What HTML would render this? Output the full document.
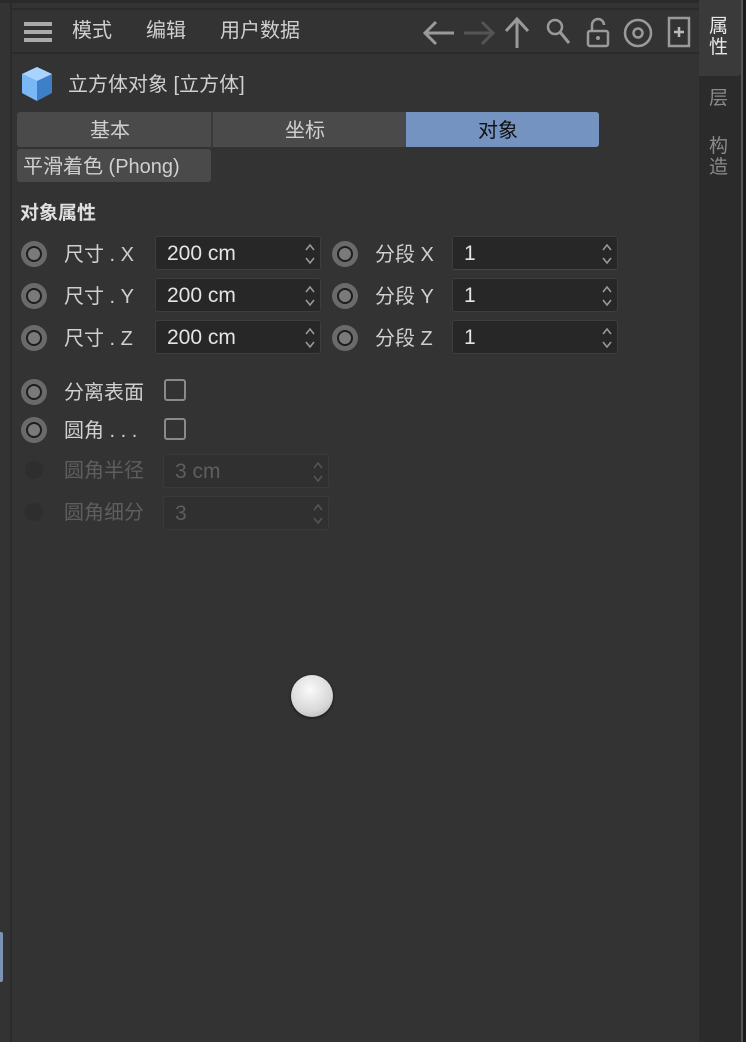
<!DOCTYPE html>
<html><head><meta charset="utf-8"><style>
*{margin:0;padding:0;box-sizing:border-box}
body{width:746px;height:1042px;background:#333;position:relative;overflow:hidden;font-family:"Liberation Sans","Noto Sans CJK SC",sans-serif;color:#d0d0d0}
.a{position:absolute}
.t{font-size:20px;white-space:nowrap;line-height:24px;margin-top:2px}
.rad{position:absolute;width:26px;height:26px;border-radius:50%;background:#6a6a6a}
.rad::after{content:"";position:absolute;left:5px;top:5px;width:16px;height:16px;border-radius:50%;background:#7a7a7a;border:2px solid #1e1e1e;box-sizing:border-box}
.fld{position:absolute;height:34px;background:#272727;border:1px solid #3e3e3e;border-radius:3px;font-size:21px;line-height:34px;color:#e4e4e4;padding:0 0 0 11px}
.sp{position:absolute;right:4px;top:5px;width:12px;height:24px}
.cb{position:absolute;width:22px;height:22px;border:2px solid #8a8a8a;border-radius:3px}
</style></head><body>
<div class="a" style="left:10px;top:0;width:2px;height:1042px;background:#2a2a2a"></div>
<div class="a" style="left:0;top:932px;width:3px;height:50px;background:#7d93b3;border-radius:0 2px 2px 0"></div>
<div class="a" style="left:0;top:0;width:699px;height:3px;background:#2a2a2a"></div>
<div class="a" style="left:12px;top:8px;width:687px;height:2px;background:#2a2a2a"></div>
<div class="a" style="left:12px;top:52px;width:687px;height:2px;background:#2a2a2a"></div>
<div class="a" style="left:699px;top:0;width:42px;height:1042px;background:#2b2b2b"></div>
<div class="a" style="left:699px;top:0;width:42px;height:76px;background:#3a3a3a;border-radius:0 0 3px 0"></div>
<div class="a" style="left:741px;top:0;width:2px;height:1042px;background:#555"></div>
<div class="a" style="left:743px;top:0;width:3px;height:1042px;background:#1a1a1a"></div>
<div class="a" style="left:709px;top:16px;font-size:19px;line-height:21px;width:22px;color:#e8e8e8">属<br>性</div>
<div class="a" style="left:709px;top:88px;font-size:19px;line-height:21px;width:22px;color:#8a8a8a">层</div>
<div class="a" style="left:709px;top:136px;font-size:19px;line-height:21px;width:22px;color:#8a8a8a">构<br>造</div>
<div class="a" style="left:24px;top:22px;width:28px;height:4px;background:#aaa;box-shadow:0 8px 0 #aaa,0 16px 0 #aaa"></div>
<div class="a t" style="left:72px;top:17px">模式</div>
<div class="a t" style="left:146px;top:17px">编辑</div>
<div class="a t" style="left:220px;top:17px">用户数据</div>
<svg class="a" style="left:420px;top:14px" width="278" height="36" viewBox="0 0 278 36" fill="none" stroke-width="3">
<path d="M34 19H6M16 8L5 19L16 30" stroke="#9a9a9a"/>
<path d="M44 19H72M62 8L73 19L62 30" stroke="#555"/>
<path d="M97 34V6M86 17L97 5L108 17" stroke="#9a9a9a"/>
<circle cx="135" cy="13" r="7" stroke="#9a9a9a" stroke-width="2.5"/><path d="M140 18L149 29" stroke="#9a9a9a" stroke-width="3"/>
<rect x="168" y="17" width="20" height="15" rx="2" stroke="#9a9a9a" stroke-width="2.5"/><path d="M172 17V11a6 6 0 0 1 12 0" stroke="#9a9a9a" stroke-width="2.5"/><circle cx="178" cy="24" r="2" fill="#9a9a9a" stroke="none"/>
<circle cx="218" cy="19" r="13" stroke="#9a9a9a" stroke-width="2.5"/><circle cx="218" cy="19" r="4.5" stroke="#9a9a9a" stroke-width="2.5"/>
<rect x="249" y="4" width="20" height="28" stroke="#9a9a9a" stroke-width="2.5"/><path d="M259 13V23M254 18H264" stroke="#bbb" stroke-width="2.5"/>
</svg>
<svg class="a" style="left:20px;top:66px" width="34" height="36" viewBox="0 0 34 36">
<path d="M17 1L32 8V27L17 35L2 27V8Z" fill="#3e80c8"/>
<path d="M17 1L32 8L17 15L2 8Z" fill="#a8d4ff"/>
<path d="M2 8L17 15V35L2 27Z" fill="#7ab8f5"/>
</svg>
<div class="a t" style="left:68px;top:71px">立方体对象 [立方体]</div>
<div class="a" style="left:17px;top:112px;width:582px;height:35px;background:#4a4a4a;border-radius:3px"></div>
<div class="a" style="left:211px;top:112px;width:2px;height:35px;background:#3a3a3a"></div>
<div class="a" style="left:406px;top:112px;width:193px;height:35px;background:#7493c0;border-radius:0 3px 3px 0"></div>
<div class="a t" style="left:90px;top:117px">基本</div>
<div class="a t" style="left:285px;top:117px">坐标</div>
<div class="a t" style="left:478px;top:117px;color:#111">对象</div>
<div class="a" style="left:17px;top:149px;width:194px;height:33px;background:#4a4a4a;border-radius:3px"></div>
<div class="a t" style="left:23px;top:153px">平滑着色 (Phong)</div>
<div class="a t" style="left:20px;top:200px;font-weight:bold;color:#e0e0e0;font-size:19px">对象属性</div>

<div class="rad" style="left:21px;top:241px"></div><div class="a t" style="left:64px;top:241px">尺寸 . X</div>
<div class="fld" style="left:155px;top:236px;width:166px">200 cm<svg class="sp" viewBox="0 0 12 24" fill="none" stroke="#999" stroke-width="1.6"><path d="M2 8L6 3L10 8M2 16L6 21L10 16"/></svg></div>
<div class="rad" style="left:332px;top:241px"></div><div class="a t" style="left:375px;top:241px">分段 X</div>
<div class="fld" style="left:452px;top:236px;width:166px;border-bottom:1px solid #8a2a2a">1<svg class="sp" viewBox="0 0 12 24" fill="none" stroke="#999" stroke-width="1.6"><path d="M2 8L6 3L10 8M2 16L6 21L10 16"/></svg></div>

<div class="rad" style="left:21px;top:283px"></div><div class="a t" style="left:64px;top:283px">尺寸 . Y</div>
<div class="fld" style="left:155px;top:278px;width:166px">200 cm<svg class="sp" viewBox="0 0 12 24" fill="none" stroke="#999" stroke-width="1.6"><path d="M2 8L6 3L10 8M2 16L6 21L10 16"/></svg></div>
<div class="rad" style="left:332px;top:283px"></div><div class="a t" style="left:375px;top:283px">分段 Y</div>
<div class="fld" style="left:452px;top:278px;width:166px">1<svg class="sp" viewBox="0 0 12 24" fill="none" stroke="#999" stroke-width="1.6"><path d="M2 8L6 3L10 8M2 16L6 21L10 16"/></svg></div>

<div class="rad" style="left:21px;top:325px"></div><div class="a t" style="left:64px;top:325px">尺寸 . Z</div>
<div class="fld" style="left:155px;top:320px;width:166px">200 cm<svg class="sp" viewBox="0 0 12 24" fill="none" stroke="#999" stroke-width="1.6"><path d="M2 8L6 3L10 8M2 16L6 21L10 16"/></svg></div>
<div class="rad" style="left:332px;top:325px"></div><div class="a t" style="left:375px;top:325px">分段 Z</div>
<div class="fld" style="left:452px;top:320px;width:166px">1<svg class="sp" viewBox="0 0 12 24" fill="none" stroke="#999" stroke-width="1.6"><path d="M2 8L6 3L10 8M2 16L6 21L10 16"/></svg></div>

<div class="rad" style="left:21px;top:379px"></div><div class="a t" style="left:64px;top:379px">分离表面</div>
<div class="cb" style="left:164px;top:379px"></div>
<div class="rad" style="left:21px;top:417px"></div><div class="a t" style="left:64px;top:417px">圆角 . . .</div>
<div class="cb" style="left:164px;top:418px"></div>

<div class="a" style="left:25px;top:461px;width:18px;height:18px;border-radius:50%;background:#2e2e2e"></div>
<div class="a t" style="left:64px;top:457px;color:#5e5e5e">圆角半径</div>
<div class="fld" style="left:163px;top:454px;width:166px;background:#303030;border-color:#3a3a3a;color:#5e5e5e">3 cm<svg class="sp" viewBox="0 0 12 24" fill="none" stroke="#555" stroke-width="1.6"><path d="M2 8L6 3L10 8M2 16L6 21L10 16"/></svg></div>
<div class="a" style="left:25px;top:503px;width:18px;height:18px;border-radius:50%;background:#2e2e2e"></div>
<div class="a t" style="left:64px;top:499px;color:#5e5e5e">圆角细分</div>
<div class="fld" style="left:163px;top:496px;width:166px;background:#303030;border-color:#3a3a3a;color:#5e5e5e">3<svg class="sp" viewBox="0 0 12 24" fill="none" stroke="#555" stroke-width="1.6"><path d="M2 8L6 3L10 8M2 16L6 21L10 16"/></svg></div>

<div class="a" style="left:291px;top:675px;width:42px;height:42px;border-radius:50%;background:radial-gradient(circle at 45% 35%,#fafafa,#d8d8d8 60%,#a8a8a8);box-shadow:0 1px 3px rgba(0,0,0,.6)"></div>
</body></html>
